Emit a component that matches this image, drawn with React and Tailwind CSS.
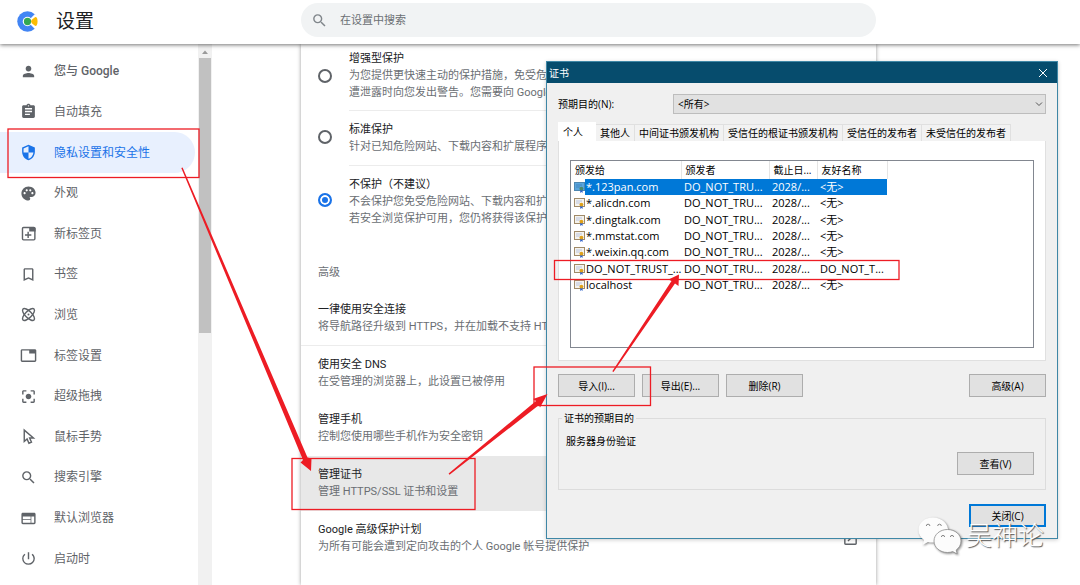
import {
  MdPerson,
  MdAssignment,
  MdSecurity,
  MdPalette,
  MdBookmarkBorder,
  MdTab,
  MdCenterFocusStrong,
  MdSearch,
  MdWeb,
  MdPowerSettingsNew,
  MdOpenInNew,
} from "react-icons/md";

function NewTabIcon({ className }) {
  return (
    <svg viewBox="0 0 24 24" className={className} aria-hidden="true">
      <rect x="3.5" y="3.5" width="17.5" height="17.5" rx="1.5" fill="none" stroke="currentColor" strokeWidth="2" />
      <path d="M13 3h7a2 2 0 0 1 2 2v4h-9z" fill="currentColor" />
      <path d="M11.5 9.5v9M7 14h9" stroke="currentColor" strokeWidth="2" />
    </svg>
  );
}

function AtomIcon({ className }) {
  return (
    <svg viewBox="0 0 24 24" className={className} fill="none" stroke="currentColor" strokeWidth="2" aria-hidden="true">
      <ellipse cx="12" cy="12" rx="11" ry="4.600" transform="rotate(45 12 12)" />
      <ellipse cx="12" cy="12" rx="11" ry="4.600" transform="rotate(-45 12 12)" />
      <circle cx="12" cy="12" r="1.400" fill="currentColor" stroke="none" />
    </svg>
  );
}

function PointerIcon({ className }) {
  return (
    <svg viewBox="0 0 24 24" className={className} fill="none" stroke="currentColor" strokeWidth="2" aria-hidden="true">
      <path d="M6 3v16l4-3.5 2.600 6 3.600-1.600-2.600-5.900H19z" />
    </svg>
  );
}

function BrowserLogo() {
  return (
    <svg viewBox="0 0 22 22" className="mb-0.5 size-[21px]" aria-hidden="true">
      <circle cx="11" cy="11" r="10.700" fill="#4285f4" />
      <path d="M11 11 18.500 3.500H22V18.500H18.500Z" fill="#fff" />
      <circle cx="11" cy="11" r="5" fill="#fff" />
      <circle cx="11" cy="11" r="3.800" fill="#34a853" />
      <path d="M14.800 11q.2-1.300 1-2l3.400-2.700q2.300 0 2.300 4.700t-2.300 4.700L15.800 13q-.8-.7-1-2Z" fill="#fbbc05" />
    </svg>
  );
}

const NAV = [
  ["您与 Google", MdPerson],
  ["自动填充", MdAssignment],
  ["隐私设置和安全性", MdSecurity],
  ["外观", MdPalette],
  ["新标签页", NewTabIcon],
  ["书签", MdBookmarkBorder],
  ["浏览", AtomIcon],
  ["标签设置", MdTab],
  ["超级拖拽", MdCenterFocusStrong],
  ["鼠标手势", PointerIcon],
  ["搜索引擎", MdSearch],
  ["默认浏览器", MdWeb],
  ["启动时", MdPowerSettingsNew],
];

function Header() {
  return (
    <header className="relative z-10 flex h-11 shrink-0 items-center bg-white shadow-[0_1px_4px_rgba(0,0,0,0.55)]">
      <div className="flex w-[301px] shrink-0 items-center gap-[18px] pl-[17px]">
        <BrowserLogo />
        <h1 className="text-[19px] leading-6 text-[#202124]">设置</h1>
      </div>
      <label className="mb-1 flex h-[34px] w-full max-w-[575px] items-center gap-3 rounded-full bg-[#f1f3f4] pl-2.5">
        <MdSearch className="size-[17px] text-[#80868b]" />
        <input
          type="search"
          aria-label="在设置中搜索"
          placeholder="在设置中搜索"
          className="flex-1 bg-transparent pt-0.5 text-[11px] outline-none placeholder:text-[#6b6f73]"
        />
      </label>
    </header>
  );
}

function Sidebar() {
  return (
    <aside className="flex w-[212px] shrink-0">
      <nav className="flex-1 pt-[7px] pr-[3px]">
        <ul className="grid h-[528px] auto-rows-fr">
          {NAV.map(([label, Icon]) => {
            const active = label === "隐私设置和安全性";
            return (
              <li key={label} className="flex">
                <a
                  href="#"
                  aria-current={active ? "page" : undefined}
                  className={
                    active
                      ? "flex flex-1 items-center gap-[17px] rounded-r-full bg-[#e8f0fe] pl-5 text-xs text-[#1a73e8]"
                      : "flex flex-1 items-center gap-[17px] pl-5 text-xs text-[#5f6368]"
                  }
                >
                  <Icon className="size-[17px]" />
                  <span className={label === "您与 Google" ? "font-medium" : ""}>{label}</span>
                </a>
              </li>
            );
          })}
        </ul>
      </nav>
      <div className="flex w-3.5 flex-col items-center bg-[#f1f1f1]" aria-hidden="true">
        <svg viewBox="0 0 14 14" className="size-3.5">
          <path d="M4 10h6L7 6.500z" fill="#9a9a9a" />
        </svg>
        <div className="h-[275px] w-3 bg-[#c1c1c1]" />
      </div>
    </aside>
  );
}

const LEVELS = [
  ["增强型保护", ["为您提供更快速主动的保护措施，免受危", "遭泄露时向您发出警告。您需要向 Google"]],
  ["标准保护", ["针对已知危险网站、下载内容和扩展程序"]],
  ["不保护（不建议）", ["不会保护您免受危险网站、下载内容和扩", "若安全浏览保护可用，您仍将获得该保护"]],
];

const ADVANCED = [
  ["一律使用安全连接", "将导航路径升级到 HTTPS，并在加载不支持 HT"],
  ["使用安全 DNS", "在受管理的浏览器上，此设置已被停用"],
  ["管理手机", "控制您使用哪些手机作为安全密钥"],
  ["管理证书", "管理 HTTPS/SSL 证书和设置"],
  ["Google 高级保护计划", "为所有可能会遭到定向攻击的个人 Google 帐号提供保护"],
];

function SettingsCard() {
  return (
    <main className="ml-[89px] w-full max-w-[575px] self-stretch bg-white text-[11px] leading-[17px] whitespace-nowrap text-[#6a6e73] shadow-[0_0_4px_rgba(0,0,0,0.4)]">
      {LEVELS.map(([title, lines], i) => (
        <label key={title} className="flex items-center gap-[17px] pl-[17px]">
          <input
            type="radio"
            name="safe-browsing"
            defaultChecked={i === 2}
            className="mb-1 size-3.5 shrink-0 appearance-none rounded-full border-2 border-[#5f6368] checked:border-[#1a73e8] checked:bg-[#1a73e8] checked:shadow-[inset_0_0_0_2px_white]"
          />
          <span
            className={
              i === 0
                ? "flex flex-1 flex-col border-b border-[#ececec] pt-1.5 pb-[9px]"
                : i === 1
                  ? "flex flex-1 flex-col border-b border-[#ececec] py-2.5"
                  : "flex flex-1 flex-col py-2.5"
            }
          >
            <span className="text-[#202124]">{title}</span>
            {lines.map((line) => (
              <span key={line}>{line}</span>
            ))}
          </span>
        </label>
      ))}
      <h2 className="px-[17px] pt-[27px] pb-2.5">高级</h2>
      {ADVANCED.map(([title, note], i) => (
        <a
          key={title}
          href="#"
          className={
            i === 0
              ? "flex items-center justify-between border-b border-[#ececec] px-[17px] py-2.5"
              : i === 3
                ? "flex items-center justify-between border-b border-transparent bg-[#e8e8e8] px-[17px] py-2.5"
                : "flex items-center justify-between border-b border-transparent px-[17px] py-2.5"
          }
        >
          <span className="flex flex-col">
            <span className="text-[#202124]">{title}</span>
            <span>{note}</span>
          </span>
          {i > 2 && <MdOpenInNew className="size-[17px] text-[#5f6368]" />}
        </a>
      ))}
    </main>
  );
}

function CertIcon({ selected }) {
  return (
    <svg viewBox="0 0 11 12" className="h-3 w-[11px] shrink-0" aria-hidden="true">
      <rect x="0.500" y="1.500" width="10" height="8" fill={selected ? "#5aa5dc" : "#f5f3ee"} stroke={selected ? "#4d86b0" : "#a08a68"} />
      <path d="M2 4h6M2 6h4" stroke={selected ? "#3a7fb8" : "#a9b8da"} strokeWidth="0.800" />
      <path d="M6.200 8v4l1.200-1 1.200 1V8z" fill="#2f62c9" />
      <circle cx="7.400" cy="7.600" r="1.900" fill={selected ? "#4b8a6a" : "#e0a21b"} />
    </svg>
  );
}

const TABS = ["个人", "其他人", "中间证书颁发机构", "受信任的根证书颁发机构", "受信任的发布者", "未受信任的发布者"];
const CERTS = ["*.123pan.com", "*.alicdn.com", "*.dingtalk.com", "*.mmstat.com", "*.weixin.qq.com", "DO_NOT_TRUST_...", "localhost"];

function DialogButton({ children, primary }) {
  return (
    <button
      type="button"
      className={
        primary
          ? "h-[23px] w-[77px] border-2 border-[#0078d7] bg-[#e1e1e1]"
          : "h-[23px] w-[77px] border border-[#adadad] bg-[#e1e1e1]"
      }
    >
      {children}
    </button>
  );
}

function CertDialog() {
  return (
    <section
      role="dialog"
      aria-label="证书"
      className="absolute top-[61px] left-[546px] z-20 w-[512px] border border-[#3f87a6] bg-[#f0f0f0] font-['Open_Sans','Noto_Sans_CJK_SC',sans-serif] text-[10px] leading-4 whitespace-nowrap text-black shadow-[0_1px_4px_rgba(0,0,0,0.2)]"
    >
      <div className="flex h-[21px] items-center justify-between bg-[#064c6d] pr-[9px] pl-0.5 text-white">
        <h2>证书</h2>
        <button type="button" aria-label="关闭窗口">
          <svg viewBox="0 0 10 10" className="size-2.5" aria-hidden="true">
            <path d="M1 1l8 8M9 1 1 9" stroke="#fff" strokeWidth="1" />
          </svg>
        </button>
      </div>
      <div className="px-[11px] pt-[11px] pb-[11px]">
        <div className="flex items-center">
          <label htmlFor="purpose" className="w-[115px]">
            预期目的(N):
          </label>
          <span className="relative flex flex-1">
            <select id="purpose" className="h-5 w-full appearance-none border border-[#bdbdbd] bg-[#e1e1e1] pl-1">
              <option>&lt;所有&gt;</option>
            </select>
            <svg viewBox="0 0 8 8" className="pointer-events-none absolute top-1.5 right-[3px] size-2" aria-hidden="true">
              <path d="M1 2.500l3 3 3-3" fill="none" stroke="#555" />
            </svg>
          </span>
        </div>
        <div role="tablist" className="mt-2 flex items-end">
          {TABS.map((tab, i) => (
            <button
              key={tab}
              type="button"
              role="tab"
              aria-selected={i === 0}
              className={
                i === 0
                  ? "h-[19px] w-[38px] bg-white pr-2 text-center"
                  : "h-[17px] border-t border-r border-[#e0e0e0] bg-[#f2f2f2] px-1"
              }
            >
              {tab}
            </button>
          ))}
        </div>
        <div className="border border-t-0 border-[#e0e0e0] bg-white px-[11px] pt-[19px] pb-3">
          <div className="h-[188px] border border-[#828790]">
            <table className="h-[132px] w-[316px] table-fixed border-collapse text-left">
              <colgroup>
                <col className="w-[110px]" />
                <col className="w-[88px]" />
                <col className="w-[48px]" />
                <col className="w-[70px]" />
              </colgroup>
              <thead>
                <tr className="h-[18px]">
                  {["颁发给", "颁发者", "截止日...", "友好名称"].map((h) => (
                    <th key={h} className="border-r border-[#e5e5e5] py-0 pl-1 font-normal">
                      {h}
                    </th>
                  ))}
                </tr>
              </thead>
              <tbody className="text-[11px]">
                {CERTS.map((name, i) => (
                  <tr key={name} className={i === 0 ? "text-white" : ""}>
                    <td className="p-0 pl-[3px]">
                      <span className="flex items-center">
                        <CertIcon selected={i === 0} />
                        <span className={i === 0 ? "flex-1 bg-[#0078d7] pl-px" : "flex-1 pl-px"}>{name}</span>
                      </span>
                    </td>
                    <td className={i === 0 ? "bg-[#0078d7] py-0 pl-[3px]" : "py-0 pl-[3px]"}>DO_NOT_TRU...</td>
                    <td className={i === 0 ? "bg-[#0078d7] py-0 pl-[3px]" : "py-0 pl-[3px]"}>2028/...</td>
                    <td className={i === 0 ? "bg-[#0078d7] py-0 pl-[3px]" : "py-0 pl-[3px]"}>{i === 5 ? "DO_NOT_T..." : "<无>"}</td>
                  </tr>
                ))}
              </tbody>
            </table>
          </div>
        </div>
        <div className="mt-[13px] flex gap-[7px]">
          <DialogButton>导入(I)...</DialogButton>
          <DialogButton>导出(E)...</DialogButton>
          <DialogButton>删除(R)</DialogButton>
          <span className="flex-1" />
          <DialogButton>高级(A)</DialogButton>
        </div>
        <fieldset className="mt-[13px] border border-[#dcdcdc] px-[7px] pb-3.5">
          <legend className="-ml-1 px-0.5">证书的预期目的</legend>
          <p className="mt-[7px]">服务器身份验证</p>
          <div className="mt-[3px] mr-1 flex justify-end">
            <DialogButton>查看(V)</DialogButton>
          </div>
        </fieldset>
        <div className="mt-3.5 flex justify-end">
          <DialogButton primary>关闭(C)</DialogButton>
        </div>
      </div>
    </section>
  );
}

function Annotations() {
  return (
    <svg
      viewBox="0 0 1080 585"
      className="pointer-events-none absolute top-0 left-0 z-30 h-[585px] w-[1080px]"
      aria-hidden="true"
    >
      <g fill="none" stroke="#ed1c24" strokeWidth="1.300">
        <rect x="8" y="129" width="191" height="48.500" />
        <rect x="292" y="458.500" width="183" height="51" />
        <rect x="534" y="367" width="116.500" height="38.500" />
        <rect x="554.500" y="260.500" width="344.500" height="19" />
      </g>
      <g fill="#ed1c24">
        <path d="M181.300 168 182.600 167.400 307.500 457.500 311.500 458.500 311 471 300.500 462.500 303 460z" />
        <path d="M448.600 473.600 449.500 474.700 539 405 540 407.500 547.500 394 533 399 536 401z" />
        <path d="M612.300 371.200 613.500 371.900 675 283.500 678.500 286 679 274.500 668.500 279.500 671.500 281z" />
      </g>
    </svg>
  );
}

function Watermark() {
  return (
    <div className="absolute top-[516px] left-[917px] z-40 flex items-center gap-[3px]">
      <svg viewBox="0 0 46 40" className="h-10 w-[46px] drop-shadow-[1px_1px_1px_rgba(0,0,0,0.45)]" aria-hidden="true">
        <path d="M16 1.500C7.500 1.500 1.500 7 1.500 14c0 4 2 7.500 5.500 10l-1.500 5 5.500-3c6 2 18-1 20-10C32 8 25 1.500 16 1.500z" fill="#fcfcfc" />
        <path d="M30.500 13.500c-7.500 0-13.500 5-13.500 11.500s6 11.500 13.500 11.500c2 0 3.600-.3 5.200-.9l4.500 2.400-1-4C42 32 44 29 44 25c0-6.500-6-11.500-13.500-11.500z" fill="#fcfcfc" stroke="#8a8a8a" strokeWidth="0.800" />
        <g fill="none" stroke="#777" strokeWidth="0.900">
          <path d="M9.300 10a1.800 1.800 0 0 1 3.600 0M20.700 10a1.800 1.800 0 0 1 3.600 0M24.400 21a1.600 1.600 0 0 1 3.200 0M33.400 21a1.600 1.600 0 0 1 3.200 0" />
        </g>
      </svg>
      <span className="text-[26px] leading-8 font-light text-white [text-shadow:1px_1px_1px_#555]">吴神论</span>
    </div>
  );
}

export default function App() {
  return (
    <div className="relative flex h-screen flex-col overflow-hidden bg-white font-[Roboto,'Noto_Sans_CJK_SC',sans-serif]">
      <Header />
      <div className="flex min-h-0 flex-1">
        <Sidebar />
        <SettingsCard />
      </div>
      <CertDialog />
      <Annotations />
      <Watermark />
    </div>
  );
}
